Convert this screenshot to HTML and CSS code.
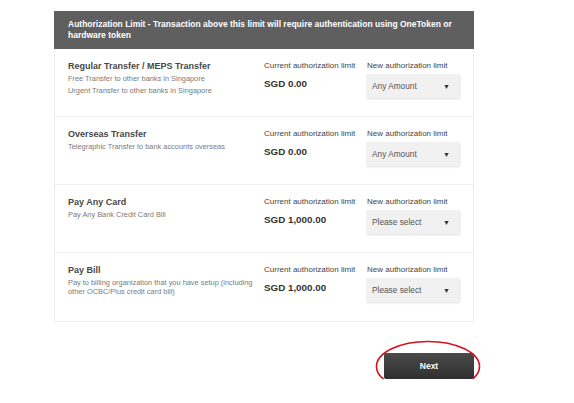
FILE: index.html
```html
<!DOCTYPE html>
<html lang="en">
  <head>
    <meta charset="UTF-8" />
    <meta name="viewport" content="width=device-width, initial-scale=1.0" />
    <title>Authorization Limit</title>
    <link rel="stylesheet" href="styles.css">
  </head>
  <body>
    <div class="container">
      <div class="panel-header">
        Authorization Limit - Transaction above this limit will require authentication using OneToken or hardware token
      </div>
      <div class="panel">
        <div class="limit-row">
          <div class="col-desc">
            <div class="row-title">Regular Transfer / MEPS Transfer</div>
            <p class="row-sub">Free Transfer to other banks in Singapore</p>
            <p class="row-sub">Urgent Transfer to other banks in Singapore</p>
          </div>
          <div class="col-current">
            <div class="col-label">Current authorization limit</div>
            <div class="amount">SGD 0.00</div>
          </div>
          <div class="col-new">
            <div class="col-label">New authorization limit</div>
            <div class="select-box"><span>Any Amount</span><span class="arrow">&#9660;</span></div>
          </div>
        </div>

        <div class="limit-row">
          <div class="col-desc">
            <div class="row-title">Overseas Transfer</div>
            <p class="row-sub">Telegraphic Transfer to bank accounts overseas</p>
          </div>
          <div class="col-current">
            <div class="col-label">Current authorization limit</div>
            <div class="amount">SGD 0.00</div>
          </div>
          <div class="col-new">
            <div class="col-label">New authorization limit</div>
            <div class="select-box"><span>Any Amount</span><span class="arrow">&#9660;</span></div>
          </div>
        </div>

        <div class="limit-row">
          <div class="col-desc">
            <div class="row-title">Pay Any Card</div>
            <p class="row-sub">Pay Any Bank Credit Card Bill</p>
          </div>
          <div class="col-current">
            <div class="col-label">Current authorization limit</div>
            <div class="amount">SGD 1,000.00</div>
          </div>
          <div class="col-new">
            <div class="col-label">New authorization limit</div>
            <div class="select-box"><span>Please select</span><span class="arrow">&#9660;</span></div>
          </div>
        </div>

        <div class="limit-row">
          <div class="col-desc">
            <div class="row-title">Pay Bill</div>
            <p class="row-sub">Pay to billing organization that you have setup (including other OCBC/Plus credit card bill)</p>
          </div>
          <div class="col-current">
            <div class="col-label">Current authorization limit</div>
            <div class="amount">SGD 1,000.00</div>
          </div>
          <div class="col-new">
            <div class="col-label">New authorization limit</div>
            <div class="select-box"><span>Please select</span><span class="arrow">&#9660;</span></div>
          </div>
        </div>
      </div>

      <div class="actions">
        <div class="next-wrap">
          <button class="next-btn">Next</button>
          <!-- red annotation ring around the button -->
          <svg class="ring" width="106" height="53" viewBox="0 0 106 53">
            <ellipse cx="53" cy="26.5" rx="51.5" ry="25" fill="none" stroke="#d4121f" stroke-width="1.6" />
          </svg>
        </div>
      </div>
    </div>
  </body>
</html>
```

FILE: styles.css
```css
body {
  font-family: "Liberation Sans", Arial, sans-serif;
  margin: 0;
  padding: 0;
  background-color: #fff;
  color: #333;
}
.container {
  width: 420px;
  margin-left: 54px;
  padding-top: 11px;
}
.panel-header {
  background-color: #5f5f5f;
  color: #fff;
  font-size: 8.5px;
  font-weight: bold;
  line-height: 11px;
  padding: 8px 14px;
}
.panel {
  border: 1px solid #eee;
  border-top: none;
}
.limit-row {
  display: flex;
  height: 68px;
  box-sizing: border-box;
  padding: 12px 0 0 13px;
  border-bottom: 1px solid #eee;
}
.limit-row:last-child {
  border-bottom: none;
}
.col-desc {
  width: 196px;
}
.col-current {
  width: 102px;
}
.col-new {
  width: 100px;
}
.row-title {
  font-size: 9px;
  font-weight: bold;
  line-height: 10px;
  color: #484848;
}
.row-sub {
  margin: 3px 0 0 0;
  font-size: 7.4px;
  line-height: 9px;
  color: #7a7a7a;
}
.col-label {
  font-size: 8px;
  line-height: 10px;
  color: #444;
  white-space: nowrap;
}
.col-new .col-label {
  padding-left: 1px;
}
.amount {
  margin-top: 7px;
  font-size: 9.8px;
  font-weight: bold;
  line-height: 12px;
  color: #333;
}
.select-box {
  margin-top: 3px;
  width: 93px;
  height: 24px;
  box-sizing: border-box;
  display: flex;
  align-items: center;
  justify-content: space-between;
  padding: 0 9px 0 6px;
  background-color: #f1f1f1;
  box-shadow: 1px 1px 2px rgba(0, 0, 0, 0.12);
  font-size: 8.3px;
  color: #555;
}
.select-box .arrow {
  font-size: 7px;
  color: #333;
}
.actions {
  display: flex;
  justify-content: flex-end;
  padding-top: 31px;
}
.next-wrap {
  position: relative;
}
.next-btn {
  display: block;
  width: 90px;
  height: 26px;
  border: none;
  border-radius: 2px;
  background: linear-gradient(#4a4a4a, #2f2f2f);
  color: #fff;
  font-family: "Liberation Sans", Arial, sans-serif;
  font-size: 8.5px;
  font-weight: bold;
}
.ring {
  position: absolute;
  left: -9px;
  top: -13px;
}
```
